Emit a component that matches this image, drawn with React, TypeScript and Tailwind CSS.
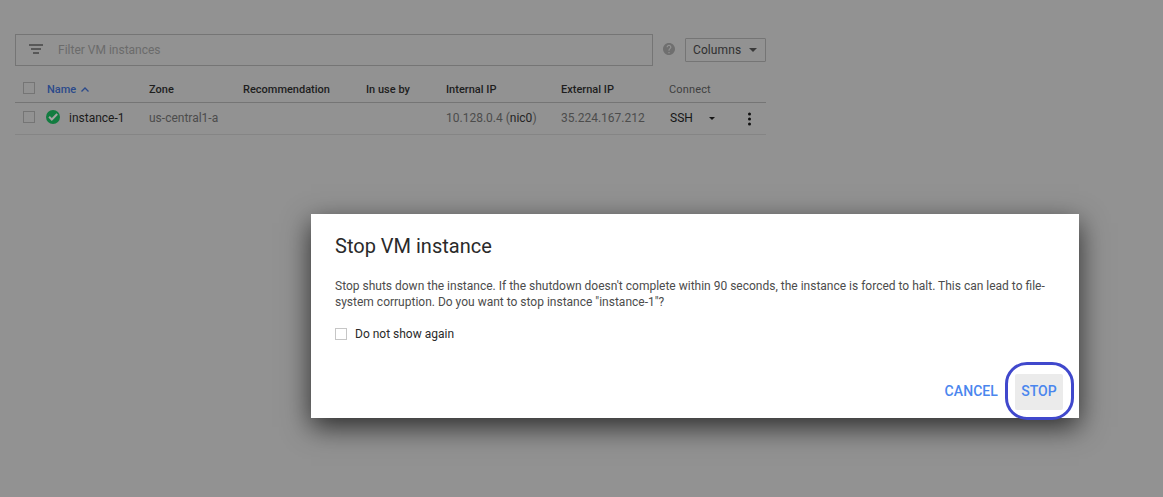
import React from "react";

function Checkbox({ className }: { className: string }) {
  return <span role="checkbox" aria-checked="false" className={`block size-3 shrink-0 border ${className}`} />;
}

function FilterBar() {
  return (
    <div className="flex h-8 items-center">
      <div className="flex h-8 w-[638px] items-center border border-[#757575] pl-[13px]">
        <svg width="14" height="10" viewBox="0 0 14 10" fill="#585858" className="mt-[-2px]">
          <path d="M0 0h14v2H0zM2 4h10v2H2zM4 8h6v2H4z" />
        </svg>
        <span className="ml-[15px] text-xs text-[#6b6b6b]">Filter VM instances</span>
      </div>
      <svg width="12" height="12" viewBox="2 2 20 20" fill="#6f6f6f" className="ml-[10px] mt-[-2px]">
        <path d="M12 2C6.48 2 2 6.48 2 12s4.48 10 10 10 10-4.48 10-10S17.52 2 12 2zm1 17h-2v-2h2v2zm2.07-7.75l-.9.92C13.45 12.9 13 13.5 13 15h-2v-.5c0-1.1.45-2.1 1.17-2.83l1.24-1.26c.37-.36.59-.86.59-1.41 0-1.1-.9-2-2-2s-2 .9-2 2H8c0-2.21 1.79-4 4-4s4 1.79 4 4c0 .88-.36 1.68-.93 2.25z" />
      </svg>
      <button className="ml-[10px] flex h-6 w-[81px] items-center rounded-[1px] border border-[#757575] pl-[7px] text-xs text-[#303030]">
        <span className="w-[56px] text-left tracking-[0.1px]">Columns</span>
        <svg width="8" height="4" viewBox="0 0 8 4" fill="#3a3a3a">
          <path d="M0 0h8L4 4z" />
        </svg>
      </button>
    </div>
  );
}

const columns = "grid grid-cols-[32px_102px_94px_123px_80px_115px_108px_97px] items-center whitespace-nowrap";

function InstanceTable() {
  return (
    <div className="mt-2.5 w-[751px]">
      <div className={`${columns} h-[27px] border-b border-[#757575] pt-0.5 text-[11px] font-medium text-[#1e1e1e]`}>
        <Checkbox className="ml-2 mt-[-4px] border-[#757575]" />
        <span className="flex items-center text-[#2b4a8b]">
          Name
          <svg width="8" height="5" viewBox="0 0 8 5" fill="none" stroke="#2b4a8b" strokeWidth="1.3" className="ml-[5px] mt-[-1px]">
            <path d="M.5 4.500L4 1l3.500 3.500" />
          </svg>
        </span>
        <span>Zone</span>
        <span>Recommendation</span>
        <span>In use by</span>
        <span>Internal IP</span>
        <span>External IP</span>
        <span className="font-normal tracking-[0.15px] text-[#404040]">Connect</span>
      </div>
      <div className={`${columns} h-8 border-b border-[#858585] pb-0.5 text-xs text-[#4c4c4c]`}>
        <Checkbox className="ml-2 mt-[-1px] border-[#757575]" />
        <span className="flex items-center text-[#1b1b1b]">
          <svg width="14" height="14" viewBox="0 0 14 14" className="ml-[-1px] mt-[-1px]">
            <circle cx="7" cy="7" r="7" fill="#127c40" />
            <path d="M3.100 6.800L5.800 9.500l5.400-5.500" fill="none" stroke="#a3a3a3" strokeWidth="2" />
          </svg>
          <span className="ml-[9px]">instance-1</span>
        </span>
        <span>us-central1-a</span>
        <span />
        <span />
        <span>
          10.128.0.4 (<span className="text-[#242424]">nic0</span>)
        </span>
        <span>35.224.167.212</span>
        <span className="flex items-center text-[#151515]">
          <span className="w-[40px] pl-px">SSH</span>
          <svg width="6" height="3" viewBox="0 0 6 3" fill="#151515" className="mt-px">
            <path d="M0 0h6L3 3z" />
          </svg>
          <svg width="4" height="14" viewBox="0 0 4 14" fill="#111111" className="ml-[33px] mt-[3px]">
            <circle cx="1.500" cy="2" r="1.500" />
            <circle cx="1.500" cy="7" r="1.500" />
            <circle cx="1.500" cy="12" r="1.500" />
          </svg>
        </span>
      </div>
    </div>
  );
}

function StopDialog() {
  return (
    <div
      role="dialog"
      aria-modal="true"
      className="absolute left-[311px] top-[214px] flex h-[204px] w-[768px] flex-col bg-white px-6 pt-[18px] shadow-[0_9px_26px_rgba(0,0,0,0.7)]"
    >
      <h1 className="text-xl leading-7 text-[#2a2a2a]">Stop VM instance</h1>
      <p className="mt-[18px] whitespace-nowrap text-xs leading-4 text-[#4c4c4c]">
        Stop shuts down the instance. If the shutdown doesn't complete within 90 seconds, the instance is forced to halt. This can lead to file-
        <br />
        system corruption. Do you want to stop instance "instance-1"?
      </p>
      <label className="mt-4 flex items-center text-xs leading-4 text-[#2a2a2a]">
        <Checkbox className="mr-2 border-[#c6c6c6]" />
        Do not show again
      </label>
      <div className="-mr-2 mt-8 flex h-9 items-center justify-end text-sm font-medium text-[#4a86ee]">
        <button className="mr-[17px] pb-0.5 tracking-[0.08px]">CANCEL</button>
        <div className="relative">
          <button className="h-9 w-12 rounded-xs bg-[#ebebeb] pb-0.5 tracking-[0.08px]">STOP</button>
          <span className="pointer-events-none absolute -left-[10px] -top-3 h-[58px] w-[69px] rounded-[22px] border-3 border-[#4048cc]" />
        </div>
      </div>
    </div>
  );
}

export default function App() {
  return (
    <main className="relative h-[497px] w-[1163px] overflow-hidden bg-[#929292] pl-[15px] pt-[34px] font-['Roboto',sans-serif]">
      <FilterBar />
      <InstanceTable />
      <StopDialog />
    </main>
  );
}
